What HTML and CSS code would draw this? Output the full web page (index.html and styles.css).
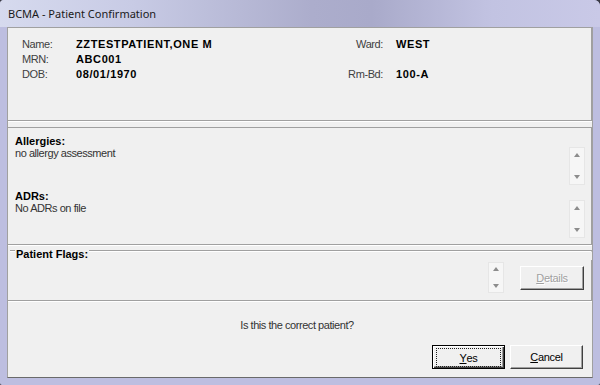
FILE: index.html
```html
<!DOCTYPE html>
<html>
<head>
<meta charset="utf-8">
<title>BCMA - Patient Confirmation</title>
<link rel="stylesheet" href="styles.css">
</head>
<body>
<div class="window">
  <div class="titlebar"><span class="title">BCMA - Patient Confirmation</span></div>
  <div class="client">
    <div class="panel info">
      <div class="info-grid">
        <span class="lbl">Name:</span><span class="val">ZZTESTPATIENT,ONE M</span><span class="lbl right">Ward:</span><span class="val side">WEST</span>
        <span class="lbl">MRN:</span><span class="val">ABC001</span><span></span><span></span>
        <span class="lbl">DOB:</span><span class="val">08/01/1970</span><span class="lbl right">Rm-Bd:</span><span class="val side">100-A</span>
      </div>
    </div>
    <div class="panel notes">
      <div class="note allergies">
        <div class="note-text">
          <div class="note-head">Allergies:</div>
          <div class="note-body">no allergy assessment</div>
        </div>
        <div class="spin">
          <svg width="6" height="4" viewBox="0 0 6 4"><path d="M3 0L6 4H0z" fill="#8c8c8c"/></svg>
          <svg width="6" height="4" viewBox="0 0 6 4"><path d="M0 0H6L3 4z" fill="#8c8c8c"/></svg>
        </div>
      </div>
      <div class="note adrs">
        <div class="note-text">
          <div class="note-head">ADRs:</div>
          <div class="note-body">No ADRs on file</div>
        </div>
        <div class="spin">
          <svg width="6" height="4" viewBox="0 0 6 4"><path d="M3 0L6 4H0z" fill="#8c8c8c"/></svg>
          <svg width="6" height="4" viewBox="0 0 6 4"><path d="M0 0H6L3 4z" fill="#8c8c8c"/></svg>
        </div>
      </div>
    </div>
    <div class="group">
      <div class="group-inner">
        <div class="legend"><span class="tick"></span><span class="legend-text">Patient Flags:</span><span class="rule"></span></div>
        <div class="group-body">
          <div class="spin flags-spin">
            <svg width="6" height="4" viewBox="0 0 6 4"><path d="M3 0L6 4H0z" fill="#8c8c8c"/></svg>
            <svg width="6" height="4" viewBox="0 0 6 4"><path d="M0 0H6L3 4z" fill="#8c8c8c"/></svg>
          </div>
          <button class="btn details" disabled><u>D</u>etails</button>
        </div>
      </div>
    </div>
    <div class="confirm">
      <div class="question">Is this the correct patient?</div>
      <div class="actions">
        <button class="btn default"><span class="focus"><u>Y</u>es</span></button>
        <button class="btn"><u>C</u>ancel</button>
      </div>
    </div>
  </div>
</div>
</body>
</html>
```

FILE: styles.css
```css
html, body {
  margin: 0;
  padding: 0;
}
body {
  width: 600px;
  height: 385px;
  overflow: hidden;
  background: #3a3a44;
  font-family: "Liberation Sans", Arial, sans-serif;
}
.window {
  width: 600px;
  height: 385px;
  background: #bdbee0;
  border-radius: 4px 6px 2px 2px;
  display: flex;
  flex-direction: column;
}
.titlebar {
  height: 27px;
  display: flex;
  align-items: center;
  padding-left: 8px;
  border-radius: 4px 6px 0 0;
  background: linear-gradient(90deg, #d6daee 0%, #c8cbe5 22%, #acadcc 52%, #a9aaca 62%, #c2c3e2 82%, #c9c9e7 100%);
}
.title {
  font-family: "Noto Sans", "Open Sans", sans-serif;
  font-size: 11px;
  color: #1a1a1a;
  margin-top: -1px;
}
.client {
  margin: 0 7px;
  height: 351px;
  box-sizing: border-box;
  background: #f0f0f0;
  border-left: 1px solid #a0a0a0;
  border-right: 1px solid #a0a0a0;
  border-bottom: 1px solid #6a6a6a;
  display: flex;
  flex-direction: column;
}
.panel {
  box-sizing: border-box;
  border-top: 1px solid #a0a0a0;
  border-right: 1px solid #a0a0a0;
  border-bottom: 1px solid #a0a0a0;
  box-shadow: 0 1px 0 #ffffff;
}
.info {
  height: 94px;
  margin-bottom: 6px;
  padding: 8px 0 0 14px;
}
.info-grid {
  display: grid;
  grid-template-columns: 54px 222px 85px 1fr;
  grid-auto-rows: 15px;
  align-items: center;
}
.lbl {
  font-size: 11px;
  letter-spacing: -0.4px;
  color: #404040;
}
.lbl.right {
  text-align: right;
}
.val {
  font-size: 11px;
  font-weight: bold;
  letter-spacing: 0.6px;
  color: #000;
}
.val.side {
  padding-left: 13px;
}
.notes {
  height: 118px;
  display: flex;
  flex-direction: column;
}
.note {
  height: 58px;
  display: flex;
  padding-left: 7px;
  padding-right: 6px;
  box-sizing: border-box;
}
.allergies {
  padding-top: 7px;
}
.adrs {
  padding-top: 4px;
}
.note-text {
  flex: 1;
}
.note-head {
  font-size: 11px;
  font-weight: bold;
  line-height: 12px;
  color: #000;
}
.note-body {
  font-size: 11px;
  line-height: 12px;
  letter-spacing: -0.45px;
  color: #333;
}
.spin {
  width: 16px;
  height: 38px;
  box-sizing: border-box;
  background: #f6f6f6;
  border: 1px solid #e6e6e6;
  display: flex;
  flex-direction: column;
  align-items: center;
  justify-content: space-between;
  padding: 5px 0;
}
.allergies .spin {
  margin-top: 12px;
}
.adrs .spin {
  margin-top: 10px;
}
.group {
  height: 56px;
  box-sizing: border-box;
  padding-top: 3px;
}
.group-inner {
  height: 53px;
  box-sizing: border-box;
  border-bottom: 1px solid #a0a0a0;
  box-shadow: 0 1px 0 #ffffff;
  display: flex;
  flex-direction: column;
}
.legend {
  height: 12px;
  display: flex;
}
.tick, .rule {
  height: 0;
  margin-top: 2px;
  border-top: 1px solid #a0a0a0;
  border-bottom: 1px solid #ffffff;
}
.tick {
  width: 5px;
  margin-left: 2px;
}
.rule {
  flex: 1;
  border-right: 1px solid #a0a0a0;
}
.legend-text {
  font-size: 11px;
  font-weight: bold;
  line-height: 12px;
  padding: 0 1px;
  color: #000;
}
.group-body {
  flex: 1;
  display: flex;
  justify-content: flex-end;
  align-items: flex-start;
  padding-top: 2px;
  padding-right: 7px;
  border-right: 1px solid #a0a0a0;
}
.flags-spin {
  height: 31px;
  padding: 4px 0;
}
.btn {
  width: 73px;
  height: 24px;
  box-sizing: border-box;
  padding: 0;
  margin: 0;
  background: #f0f0f0;
  border: 1px solid;
  border-color: #ffffff #404040 #404040 #ffffff;
  box-shadow: inset -1px -1px 0 #a0a0a0;
  font-family: "Liberation Sans", Arial, sans-serif;
  font-size: 11px;
  letter-spacing: -0.3px;
  color: #000;
  display: flex;
  align-items: center;
  justify-content: center;
}
.details {
  width: 64px;
  margin-top: 4px;
  margin-left: 16px;
  color: #a0a0a0;
  text-shadow: 1px 1px 0 #ffffff;
}
.btn.default {
  border-color: #000;
  box-shadow: inset 1px 1px 0 #ffffff, inset -1px -1px 0 #404040, inset -2px -2px 0 #a0a0a0;
  align-items: stretch;
}
.focus {
  flex: 1;
  margin: 2px 3px 1px 3px;
  border: 1px dotted #202020;
  display: flex;
  align-items: center;
  justify-content: center;
}
.confirm {
  margin-top: 1px;
  height: 75px;
  display: flex;
  flex-direction: column;
}
.question {
  padding-top: 17px;
  padding-right: 6px;
  line-height: 13px;
  text-align: center;
  font-size: 11px;
  letter-spacing: -0.45px;
  color: #333;
}
.actions {
  margin-top: 13px;
  display: flex;
  justify-content: flex-end;
  gap: 5px;
  padding-right: 9px;
}
```
